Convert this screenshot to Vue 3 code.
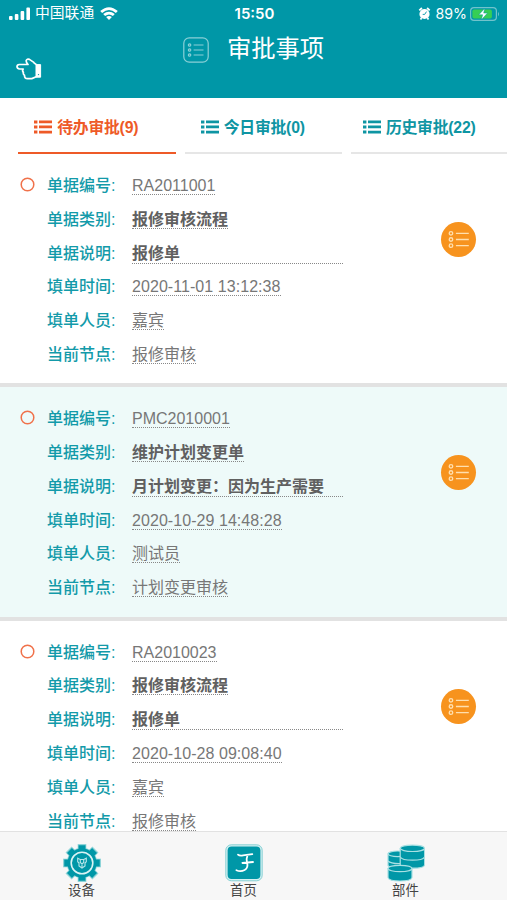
<template>
  <div class="page">
    <header class="header">
      <div class="status-bar">
        <div class="status-side">
          <svg class="signal" viewBox="0 0 22 14">
            <rect x="0" y="9" width="3.6" height="4" rx="1" />
            <rect x="5.8" y="7" width="3.6" height="6" rx="1" />
            <rect x="11.6" y="4" width="3.6" height="9" rx="1" />
            <rect x="17.4" y="0.5" width="3.6" height="12.5" rx="1" />
          </svg>
          <span class="carrier">中国联通</span>
          <svg class="wifi" viewBox="0 0 18 13">
            <path d="M0.2 4 Q9 -3.6 17.8 4 L15.9 6 Q9 0.2 2.1 6 Z" />
            <path d="M3.2 7.1 Q9 2.2 14.8 7.1 L12.9 9 Q9 5.8 5.1 9 Z" />
            <path d="M6.1 10.1 Q9 7.7 11.9 10.1 L9 13 Z" />
          </svg>
        </div>
        <span class="time">15:50</span>
        <div class="status-side right">
          <svg class="alarm" viewBox="0 0 12 13">
            <circle cx="6" cy="7" r="5.1" fill="#fff" />
            <path d="M0.8 3.4 L3.4 1 M8.6 1 L11.2 3.4 M2 12.4 L3 11 M10 12.4 L9 11" stroke="#fff" stroke-width="1.8" />
            <path d="M8 4.6 L6.2 7.4 H4.2" fill="none" stroke="#0097a7" stroke-width="0.9" />
          </svg>
          <span class="percent">89%</span>
          <svg class="battery" viewBox="0 0 30 14">
            <rect x="0.6" y="0.6" width="25.8" height="12.8" rx="3.4" fill="none" stroke="#71c3cc" stroke-width="1.2" />
            <rect x="2.4" y="2.4" width="19.5" height="9.2" rx="1.8" fill="#36ce55" />
            <path d="M28 4.7 Q30 7 28 9.3 Z" fill="#71c3cc" />
            <path d="M14.8 1.2 L8.8 7.8 H12.6 L11.4 12.8 L17.5 6.1 H13.7 Z" fill="#fff" stroke="#0097a7" stroke-width="0.5" />
          </svg>
        </div>
      </div>
      <div class="title-bar">
        <svg class="hand" viewBox="0 0 26 22">
          <path d="M18.2 4.6 L13.4 1.4 Q11 0.4 10.2 2.6 Q10 4.2 12 6.5 H3.4 Q1 6.7 1 8.6 Q1 10.8 3.6 11 H7.2 Q5.9 12.8 7.4 14.4 Q6.9 16.4 8.5 17.3 Q8.4 20.5 11.6 20.6 H15.8 L20.2 18.8" />
          <path d="M17.8 4.8 L20.4 6.6" />
          <rect class="cuff" x="20" y="6.6" width="4.6" height="12.6" />
          <circle cx="22.5" cy="16.6" r="0.7" class="button-dot" />
        </svg>
        <div class="title">
          <svg class="title-icon" viewBox="0 0 26 26">
            <rect x="0.8" y="0.8" width="24.4" height="24.4" rx="5.5" />
            <path d="M10.6 8 H20.5 M10.6 13 H20.5 M10.6 18 H20.5" />
            <circle cx="6.6" cy="8" r="1.2" />
            <circle cx="6.6" cy="13" r="1.2" />
            <circle cx="6.6" cy="18" r="1.2" />
          </svg>
          <h1>审批事项</h1>
        </div>
      </div>
    </header>

    <nav class="tabs">
      <button
        v-for="(tab, i) in tabs"
        :key="tab.name"
        class="tab"
        :class="{ active: i === activeTab }"
        @click="activeTab = i"
      >
        <svg class="list-icon" viewBox="0 0 18 14">
          <path d="M0 0.5h3.4v3H0z M5 0.5h13v2.7H5z M0 5.5h3.4v3H0z M5 5.6h13v2.7H5z M0 10.6h3.4v3H0z M5 10.8h13v2.7H5z" />
        </svg>
        <span>{{ tab.name }}({{ tab.count }})</span>
      </button>
    </nav>

    <main class="list">
      <section v-for="item in items" :key="item.code" class="card">
        <svg class="radio" viewBox="0 0 15 15">
          <circle cx="7.5" cy="7.5" r="6.3" />
        </svg>
        <div class="fields">
          <div class="row">
            <label>单据编号:</label>
            <span class="value">{{ item.code }}</span>
          </div>
          <div class="row">
            <label>单据类别:</label>
            <span class="value strong">{{ item.type }}</span>
          </div>
          <div class="row">
            <label>单据说明:</label>
            <span class="value strong desc">{{ item.desc }}</span>
          </div>
          <div class="row">
            <label>填单时间:</label>
            <span class="value time-value">{{ item.time }}</span>
          </div>
          <div class="row">
            <label>填单人员:</label>
            <span class="value">{{ item.person }}</span>
          </div>
          <div class="row">
            <label>当前节点:</label>
            <span class="value">{{ item.node }}</span>
          </div>
        </div>
        <button class="detail-btn">
          <svg viewBox="0 0 34 34">
            <path d="M14.5 11 H27 M14.5 17 H27 M14.5 23 H27" />
            <circle cx="9.7" cy="11" r="1.7" />
            <circle cx="9.7" cy="17" r="1.7" />
            <circle cx="9.7" cy="23" r="1.7" />
          </svg>
        </button>
      </section>
    </main>

    <footer class="tab-bar">
      <div class="bar-item">
        <svg viewBox="0 0 38 38">
          <g class="halo">
            <circle cx="19" cy="19" r="14.5" />
            <rect v-for="a in teeth" :key="a" x="15.5" y="0.8" width="7" height="7" :transform="`rotate(${a} 19 19)`" />
          </g>
          <g fill="#0097a7">
            <circle cx="19" cy="19" r="14.5" />
            <rect v-for="a in teeth" :key="a" x="15.5" y="1.2" width="7" height="7" :transform="`rotate(${a} 19 19)`" />
          </g>
          <circle cx="19" cy="19" r="10.8" fill="none" stroke="#d9f3f4" stroke-width="1.6" />
          <path d="M14.7 14.2 L17.2 15.5 H20.8 L23.3 14.2 V17.7 L22 19 V22 L19 24 L16 22 V19 L14.7 17.7 Z M17.3 16 V18.5 L19 20 L20.7 18.5 V16 M19 20 V23" fill="none" stroke="#b8e7ea" stroke-width="1.1" />
        </svg>
        <span>设备</span>
      </div>
      <div class="bar-item">
        <svg viewBox="0 0 38 38">
          <rect x="0.8" y="0.8" width="36.4" height="36" rx="5.5" fill="#d4f1f2" stroke="#70c6cc" stroke-width="0.8" />
          <rect x="2.6" y="2.6" width="32.8" height="32.4" rx="4" fill="#0097a7" />
          <path d="M13 10.6 Q14.5 12 18 11.4 L27.3 10.2 M22.6 11 Q21 15 22 18.4 M17.4 19 L28 18 M22 18.4 Q23.6 23.6 19.6 26 Q15.6 28.2 11.4 26.2" fill="none" stroke="#fff" stroke-width="1.8" stroke-linecap="round" />
        </svg>
        <span>首页</span>
      </div>
      <div class="bar-item">
        <svg class="drums" viewBox="0 0 38 38">
          <path d="M1 10 V21.6 Q3 24.4 14 24 V10 Z" />
          <path d="M1 17 Q4 20 14 19.6" />
          <ellipse cx="10.5" cy="9.8" rx="9.5" ry="2.8" />
          <path d="M13.2 4.5 V21 Q14 24.2 25.5 24.2 Q37 24.2 37.6 21 V4.5 Z" />
          <path d="M13.2 13 Q15 16.2 25.5 16.2 Q36 16.2 37.6 13" />
          <ellipse cx="25.4" cy="4.3" rx="12.1" ry="3.2" />
          <path d="M1 24.5 V33.5 Q1.5 37 13 37 Q24.5 37 25 33.5 V24.5 Z" />
          <ellipse cx="13" cy="24.5" rx="12" ry="3.2" />
        </svg>
        <span>部件</span>
      </div>
    </footer>
  </div>
</template>

<script setup>
import { ref } from 'vue'

const activeTab = ref(0)

const tabs = [
  { name: '待办审批', count: 9 },
  { name: '今日审批', count: 0 },
  { name: '历史审批', count: 22 }
]

const items = [
  {
    code: 'RA2011001',
    type: '报修审核流程',
    desc: '报修单',
    time: '2020-11-01 13:12:38',
    person: '嘉宾',
    node: '报修审核'
  },
  {
    code: 'PMC2010001',
    type: '维护计划变更单',
    desc: '月计划变更：因为生产需要',
    time: '2020-10-29 14:48:28',
    person: '测试员',
    node: '计划变更审核'
  },
  {
    code: 'RA2010023',
    type: '报修审核流程',
    desc: '报修单',
    time: '2020-10-28 09:08:40',
    person: '嘉宾',
    node: '报修审核'
  }
]

const teeth = [0, 45, 90, 135, 180, 225, 270, 315]
</script>

<style>
body {
  margin: 0;
  overflow: hidden;
}
</style>

<style scoped>
.page {
  height: 100vh;
  display: flex;
  flex-direction: column;
  overflow: hidden;
  background: #fff;
  font-family: "Liberation Sans", "Noto Sans CJK SC", sans-serif;
  font-size: 16px;
}

button {
  border: none;
  background: none;
  padding: 0;
  font-family: inherit;
  cursor: pointer;
}

/* header */
.header {
  flex: none;
  height: 98px;
  background: #0097a7;
  color: #fff;
}

.status-bar {
  display: flex;
  align-items: center;
  height: 27px;
  padding: 0 7px 0 9px;
}

.status-side {
  flex: 1;
  display: flex;
  align-items: center;
}

.status-side.right {
  justify-content: flex-end;
}

.signal {
  width: 22px;
  height: 14px;
  margin-right: 4px;
  fill: #fff;
}

.carrier {
  font-size: 14.8px;
  line-height: 29px;
}

.wifi {
  width: 18px;
  height: 13px;
  margin-left: 6px;
  fill: #fff;
}

.time {
  font-family: Inter, sans-serif;
  font-size: 15px;
  font-weight: 600;
}

.alarm {
  width: 13px;
  height: 13px;
  margin-right: 5px;
}

.percent {
  font-family: Inter, sans-serif;
  font-size: 14.2px;
}

.battery {
  width: 30px;
  height: 14px;
  margin-left: 3px;
}

.title-bar {
  display: grid;
  grid-template-columns: 1fr auto 1fr;
  padding-left: 16px;
  padding-right: 16px;
}

.hand {
  width: 26px;
  height: 22px;
  margin-top: 31px;
  fill: none;
  stroke: #fff;
  stroke-width: 1.7;
  stroke-linejoin: round;
}

.cuff {
  fill: #fff;
  stroke-width: 1;
}

.button-dot {
  fill: #0097a7;
  stroke: none;
}

.title {
  display: flex;
  align-items: center;
  height: 44px;
}

.title-icon {
  width: 26px;
  height: 26px;
  margin: 2px 18px 0 0;
  fill: none;
  stroke: #8bd0d7;
  stroke-width: 1.2;
}

.title h1 {
  margin: 0;
  font-size: 24.3px;
  font-weight: 400;
  line-height: 46px;
}

/* tabs */
.tabs {
  flex: none;
  display: flex;
  gap: 9px;
  height: 56px;
  padding-left: 18px;
}

.tab {
  flex: none;
  display: flex;
  align-items: center;
  justify-content: center;
  gap: 5px;
  box-sizing: border-box;
  width: 157.5px;
  height: 56px;
  padding-top: 3px;
  padding-right: 21px;
  border-bottom: 2px solid #e6e6e6;
  color: #0e95a3;
  font-size: 15.8px;
  font-weight: 700;
  letter-spacing: -0.2px;
}

.tab.active {
  color: #ee5a28;
  border-bottom-color: #ee5a28;
}

.list-icon {
  width: 18px;
  height: 14px;
  fill: currentColor;
}

/* approval cards */
.list {
  flex: 1;
  min-height: 0;
  overflow: hidden;
}

.card {
  display: flex;
  box-sizing: border-box;
  height: 233.3px;
  padding: 14px 31px 0 20px;
  border-bottom: 4px solid #e2e2e2;
}

.card:nth-child(even) {
  background: #eefaf9;
}

.radio {
  flex: none;
  width: 15px;
  height: 15px;
  margin: 9px 12px 0 0;
  fill: none;
  stroke: #f0714a;
  stroke-width: 1.5;
}

.fields {
  flex: 1;
}

.row {
  display: flex;
  height: 33.8px;
  line-height: 36px;
}

.row label {
  width: 85px;
  color: #139aa9;
  font-weight: 500;
}

.value {
  height: 19px;
  margin-top: 7px;
  line-height: 22px;
  color: #777;
  border-bottom: 1px dotted #888;
}

.time-value {
  letter-spacing: 0.06px;
}

.strong {
  color: #606060;
  font-weight: 700;
}

.desc {
  width: 211px;
  height: 20px;
}

.detail-btn {
  align-self: flex-start;
  width: 35px;
  height: 35px;
  margin-top: 54px;
  border-radius: 50%;
  background: #f7931e;
}

.detail-btn svg {
  display: block;
  fill: none;
  stroke: #ffdfae;
  stroke-width: 1.3;
}

/* bottom bar */
.tab-bar {
  flex: none;
  display: flex;
  gap: 87px;
  box-sizing: border-box;
  height: 69px;
  padding: 12px 44px 0 44px;
  border-top: 1px solid #e2e2e2;
  background: #f7f7f7;
}

.bar-item {
  display: flex;
  flex-direction: column;
  align-items: center;
  width: 75px;
  color: #444;
  font-size: 13.4px;
  line-height: 17px;
}

.bar-item svg {
  width: 38px;
  height: 38px;
}

.halo {
  fill: #d4f1f2;
  stroke: #8fd4d8;
  stroke-width: 1.6;
}

.drums {
  fill: #0097a7;
  stroke: #a9e0e3;
  stroke-width: 1.2;
}
</style>
